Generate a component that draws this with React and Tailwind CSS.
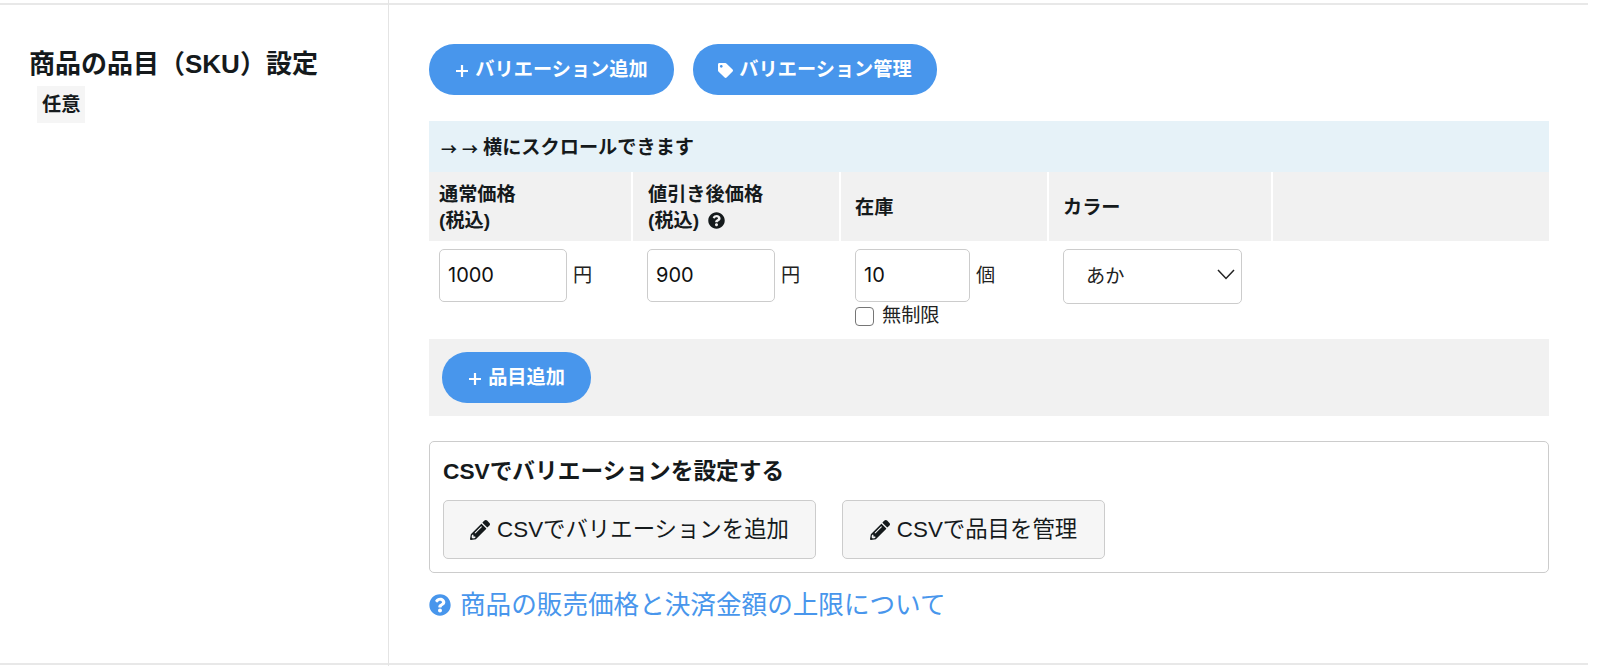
import React from "react";
import { FaTag, FaPencilAlt, FaQuestionCircle } from "react-icons/fa";

const font = "font-['Liberation_Sans','Noto_Sans_CJK_JP',sans-serif]";

function Pill({ children, className = "" }) {
  return (
    <button className={`h-[51px] pt-[2px] rounded-[25px] bg-[#4896ec] text-white font-bold text-[19.2px] flex items-center justify-center gap-[6px] ${className}`}>
      {children}
    </button>
  );
}

function Plus() {
  return (
    <svg width="14" height="14" viewBox="0 0 14 14" className="shrink-0">
      <path d="M7 1v12M1 7h12" stroke="#fff" strokeWidth="2.2" />
    </svg>
  );
}

function NumberCell({ width, cellWidth, value, unit, children }) {
  return (
    <div className={`shrink-0 ${cellWidth} pt-2`}>
      <div className="flex items-center">
        <input
          defaultValue={value}
          className={`${width} h-[53px] rounded-[5px] border border-[#cccccc] bg-white pl-[8px] pb-[2px] font-['Inter',sans-serif] text-[20px] text-[#111] outline-none`}
        />
        <span className="ml-[6px] pt-[2px] text-[19.2px] text-[#222]">{unit}</span>
      </div>
      {children}
    </div>
  );
}

function Head({ className = "", children }) {
  return (
    <div className={`shrink-0 h-full pt-[2px] flex flex-col justify-center border-r-2 border-white text-[19.2px] leading-[26px] font-bold text-[#151a1c] ${className}`}>
      {children}
    </div>
  );
}

function CsvButton({ children, className = "" }) {
  return (
    <button className={`h-[59px] rounded-[5px] border border-[#cccccc] bg-[#f6f6f6] text-[22.4px] text-[#151a1c] flex items-center justify-center gap-[7px] ${className}`}>
      <FaPencilAlt className="w-[20px] h-[20px] text-[#151a1c]" />
      {children}
    </button>
  );
}

export default function App() {
  return (
    <div className={`${font} w-[1588px] h-[666px] flex bg-white text-[#151a1c]`}>
      <div className="w-[389px] shrink-0 border-r border-[#e4e4e4] pt-[3px]">
        <div className="h-[662px] border-y-2 border-[#e8e8e8] pl-[29px] pt-[41px]">
          <h2 className="text-[26px] leading-[36px] font-bold text-[#151a1c]">商品の品目（SKU）設定</h2>
          <span className="inline-block ml-[8px] mt-[4px] px-[5px] bg-[#f5f5f5] text-[19.2px] leading-[37px] font-bold">任意</span>
        </div>
      </div>
      <div className="flex-1 pt-[3px]">
        <div className="h-[662px] border-y-2 border-[#e8e8e8] pl-[40px] pr-[39px] pt-[39px]">
          <div className="flex gap-[19px]">
            <Pill className="w-[245px]"><Plus />バリエーション追加</Pill>
            <Pill className="w-[244px]"><FaTag className="w-[15px] h-[15px]" />バリエーション管理</Pill>
          </div>

          <div className="mt-[26px] h-[51px] pt-[3px] bg-[#e6f2f8] flex items-center pl-[12px] text-[19.2px] font-bold">
            <span className="font-['Noto_Sans_CJK_JP',sans-serif] text-[16px] w-[21px]">→</span>
            <span className="font-['Noto_Sans_CJK_JP',sans-serif] text-[16px] w-[21px]">→</span>
            横にスクロールできます
          </div>

          <div className="h-[69px] bg-[#f1f1f1] flex">
            <Head className="w-[204px] pl-[10px]"><span>通常価格</span><span>(税込)</span></Head>
            <Head className="w-[208px] pl-[15px]">
              <span>値引き後価格</span>
              <span className="flex items-center gap-[9px]">(税込)<FaQuestionCircle className="w-[17px] h-[17px]" /></span>
            </Head>
            <Head className="w-[208px] pl-[14px]">在庫</Head>
            <Head className="w-[224px] pl-[14px]">カラー</Head>
          </div>

          <div className="h-[98px] flex">
            <NumberCell cellWidth="w-[208px] pl-[10px]" width="w-[128px]" value="1000" unit="円" />
            <NumberCell cellWidth="w-[208px] pl-[10px]" width="w-[128px]" value="900" unit="円" />
            <NumberCell cellWidth="w-[218px] pl-[10px]" width="w-[115px]" value="10" unit="個">
              <label className="flex items-center mt-[4px] h-[20px]">
                <span className="w-[19px] h-[19px] rounded-[4px] border-[1.5px] border-[#767676] bg-white" />
                <span className="ml-[8px] text-[19.2px] text-[#222]">無制限</span>
              </label>
            </NumberCell>
            <div className="pt-2 relative shrink-0">
              <select defaultValue="あか" className="appearance-none w-[179px] h-[55px] pt-[2px] rounded-[5px] border border-[#cccccc] bg-white pl-[22px] text-[19.2px] text-[#222] outline-none">
                <option>あか</option>
              </select>
              <svg width="18" height="11" viewBox="0 0 18 11" className="absolute right-[7px] top-[28px] pointer-events-none">
                <path d="M1 1l8 8.5L17 1" fill="none" stroke="#222" strokeWidth="1.5" />
              </svg>
            </div>
          </div>

          <div className="h-[77px] bg-[#f1f1f1] flex items-center pl-[13px]">
            <Pill className="w-[149px]"><Plus />品目追加</Pill>
          </div>

          <div className="mt-[25px] h-[132px] rounded-[5px] border border-[#cccccc] pl-[13px] pt-[13px]">
            <h3 className="text-[22.7px] leading-[32px] font-bold">CSVでバリエーションを設定する</h3>
            <div className="flex gap-[26px] mt-[13px]">
              <CsvButton className="w-[373px]">CSVでバリエーションを追加</CsvButton>
              <CsvButton className="w-[263px]">CSVで品目を管理</CsvButton>
            </div>
          </div>

          <div className="mt-[16px] flex items-center gap-[9px] text-[#4896ec]">
            <FaQuestionCircle className="w-[22px] h-[22px]" />
            <a className="text-[25.6px] leading-[32px]">商品の販売価格と決済金額の上限について</a>
          </div>
        </div>
      </div>
    </div>
  );
}
